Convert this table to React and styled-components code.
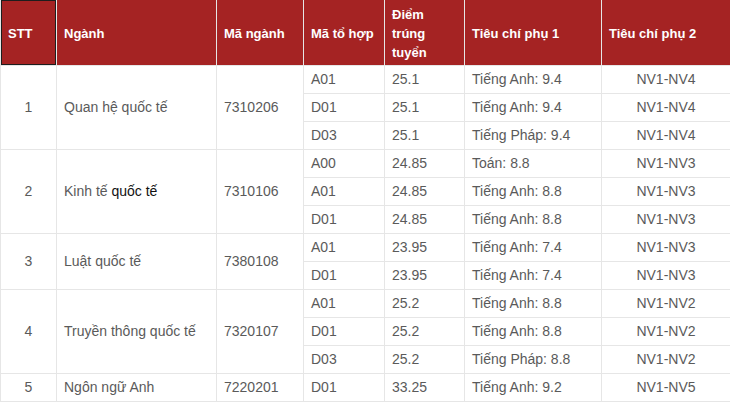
import React from 'react';
import styled, { createGlobalStyle } from 'styled-components';

const GlobalStyle = createGlobalStyle`
  html, body {
    margin: 0;
    padding: 0;
    background: #fff;
  }
  body {
    font-family: 'Liberation Sans', Arial, Helvetica, sans-serif;
  }
`;

const Table = styled.table`
  width: 730px;
  table-layout: fixed;
  border-collapse: collapse;
  font-size: 14px;
  line-height: 19px;
  color: #5a5a5a;
`;

const HeadCell = styled.th`
  background: #a52323;
  color: #fff;
  font-size: 13px;
  font-weight: bold;
  text-align: left;
  vertical-align: middle;
  padding: 5px 7px 3px;
  border: 1px solid #e6e6e6;
  border-top: none;
  box-shadow: ${(p) => (p.$selected ? 'inset 0 0 0 1px #1d1d1d' : 'none')};
`;

const Cell = styled.td`
  padding: 4px 7px;
  border: 1px solid #e6e6e6;
  vertical-align: middle;
  text-align: ${(p) => (p.$center ? 'center' : 'left')};
`;

const Dark = styled.span`
  color: #111;
`;

const groups = [
  {
    stt: 1,
    name: 'Quan hệ quốc tế',
    code: '7310206',
    rows: [
      ['A01', '25.1', 'Tiếng Anh: 9.4', 'NV1-NV4'],
      ['D01', '25.1', 'Tiếng Anh: 9.4', 'NV1-NV4'],
      ['D03', '25.1', 'Tiếng Pháp: 9.4', 'NV1-NV4'],
    ],
  },
  {
    stt: 2,
    name: (
      <>
        Kinh tế <Dark>quốc tế</Dark>
      </>
    ),
    code: '7310106',
    rows: [
      ['A00', '24.85', 'Toán: 8.8', 'NV1-NV3'],
      ['A01', '24.85', 'Tiếng Anh: 8.8', 'NV1-NV3'],
      ['D01', '24.85', 'Tiếng Anh: 8.8', 'NV1-NV3'],
    ],
  },
  {
    stt: 3,
    name: 'Luật quốc tế',
    code: '7380108',
    rows: [
      ['A01', '23.95', 'Tiếng Anh: 7.4', 'NV1-NV3'],
      ['D01', '23.95', 'Tiếng Anh: 7.4', 'NV1-NV3'],
    ],
  },
  {
    stt: 4,
    name: 'Truyền thông quốc tế',
    code: '7320107',
    rows: [
      ['A01', '25.2', 'Tiếng Anh: 8.8', 'NV1-NV2'],
      ['D01', '25.2', 'Tiếng Anh: 8.8', 'NV1-NV2'],
      ['D03', '25.2', 'Tiếng Pháp: 8.8', 'NV1-NV2'],
    ],
  },
  {
    stt: 5,
    name: 'Ngôn ngữ Anh',
    code: '7220201',
    rows: [['D01', '33.25', 'Tiếng Anh: 9.2', 'NV1-NV5']],
  },
];

const widths = [56, 160, 87, 81, 80, 137, 129];

export default function App() {
  return (
    <>
      <GlobalStyle />
      <Table>
        <colgroup>
          {widths.map((w, i) => (
            <col key={i} style={{ width: w }} />
          ))}
        </colgroup>
        <thead>
          <tr>
            <HeadCell $selected>STT</HeadCell>
            <HeadCell>Ngành</HeadCell>
            <HeadCell>Mã ngành</HeadCell>
            <HeadCell>Mã tổ hợp</HeadCell>
            <HeadCell>Điểm trúng tuyển</HeadCell>
            <HeadCell>Tiêu chí phụ 1</HeadCell>
            <HeadCell>Tiêu chí phụ 2</HeadCell>
          </tr>
        </thead>
        <tbody>
          {groups.map((g) =>
            g.rows.map((r, i) => (
              <tr key={`${g.stt}-${i}`}>
                {i === 0 && (
                  <>
                    <Cell $center rowSpan={g.rows.length}>
                      {g.stt}
                    </Cell>
                    <Cell rowSpan={g.rows.length}>{g.name}</Cell>
                    <Cell rowSpan={g.rows.length}>{g.code}</Cell>
                  </>
                )}
                <Cell>{r[0]}</Cell>
                <Cell>{r[1]}</Cell>
                <Cell>{r[2]}</Cell>
                <Cell $center>{r[3]}</Cell>
              </tr>
            ))
          )}
        </tbody>
      </Table>
    </>
  );
}
